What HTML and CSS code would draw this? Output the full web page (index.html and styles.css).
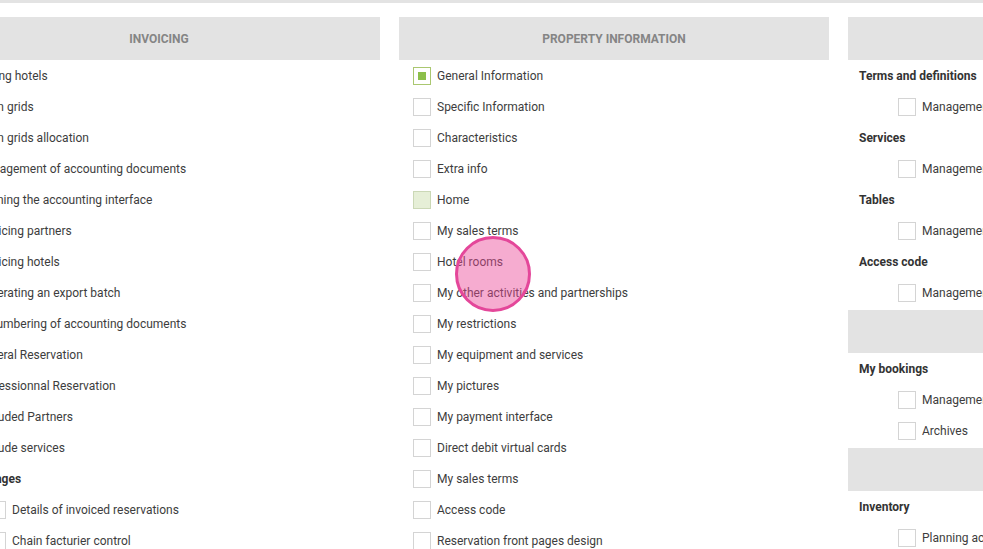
FILE: index.html
```html
<!DOCTYPE html>
<html lang="en">

<head>
  <meta charset="UTF-8">
  <meta name="viewport" content="width=device-width, initial-scale=1.0">
  <title>Access rights</title>
  <link rel="stylesheet" href="styles.css">
</head>

<body>
  <div class="topbar"></div>

  <div class="board">
    <section class="col col-first">
      <div class="band">Invoicing</div>
      <ul class="list">
        <li class="item"><span class="box"></span>Listing hotels</li>
        <li class="item"><span class="box"></span>Open grids</li>
        <li class="item"><span class="box"></span>Open grids allocation</li>
        <li class="item"><span class="box"></span>Management of accounting documents</li>
        <li class="item"><span class="box"></span>Defining the accounting interface</li>
        <li class="item"><span class="box"></span>Invoicing partners</li>
        <li class="item"><span class="box"></span>Invoicing hotels</li>
        <li class="item"><span class="box"></span>Generating an export batch</li>
        <li class="item"><span class="box"></span>Renumbering of accounting documents</li>
        <li class="item"><span class="box"></span>General Reservation</li>
        <li class="item"><span class="box"></span>Professionnal Reservation</li>
        <li class="item"><span class="box"></span>Excluded Partners</li>
        <li class="item"><span class="box"></span>Exclude services</li>
        <li class="group">Report pages</li>
        <li class="item sub"><span class="box"></span>Details of invoiced reservations</li>
        <li class="item sub"><span class="box"></span>Chain facturier control</li>
      </ul>
    </section>

    <section class="col">
      <div class="band">Property information</div>
      <ul class="list">
        <li class="item"><span class="box checked"></span>General Information</li>
        <li class="item"><span class="box"></span>Specific Information</li>
        <li class="item"><span class="box"></span>Characteristics</li>
        <li class="item"><span class="box"></span>Extra info</li>
        <li class="item"><span class="box partial"></span>Home</li>
        <li class="item"><span class="box"></span>My sales terms</li>
        <li class="item"><span class="box"></span>Hotel rooms</li>
        <li class="item"><span class="box"></span>My other activities and partnerships</li>
        <li class="item"><span class="box"></span>My restrictions</li>
        <li class="item"><span class="box"></span>My equipment and services</li>
        <li class="item"><span class="box"></span>My pictures</li>
        <li class="item"><span class="box"></span>My payment interface</li>
        <li class="item"><span class="box"></span>Direct debit virtual cards</li>
        <li class="item"><span class="box"></span>My sales terms</li>
        <li class="item"><span class="box"></span>Access code</li>
        <li class="item"><span class="box"></span>Reservation front pages design</li>
      </ul>
    </section>

    <section class="col">
      <div class="band">Settings</div>
      <ul class="list">
        <li class="group">Terms and definitions</li>
        <li class="item sub"><span class="box"></span>Management</li>
        <li class="group">Services</li>
        <li class="item sub"><span class="box"></span>Management</li>
        <li class="group">Tables</li>
        <li class="item sub"><span class="box"></span>Management</li>
        <li class="group">Access code</li>
        <li class="item sub"><span class="box"></span>Management</li>
      </ul>
      <div class="band band-next">Reservations</div>
      <ul class="list">
        <li class="group">My bookings</li>
        <li class="item sub"><span class="box"></span>Management</li>
        <li class="item sub"><span class="box"></span>Archives</li>
      </ul>
      <div class="band band-next">Availability</div>
      <ul class="list">
        <li class="group">Inventory</li>
        <li class="item sub"><span class="box"></span>Planning access</li>
      </ul>
    </section>
  </div>

  <div class="touch"></div>
</body>

</html>
```

FILE: styles.css
```css
body {
  font-family: Roboto, "Liberation Sans", sans-serif;
  font-size: 12px;
  color: #3d3d3d;
  background-color: #ffffff;
  margin: 0;
  padding: 0;
  overflow: hidden;
  height: 100vh;
}

.topbar {
  height: 3px;
  background-color: #e3e3e3;
}

.board {
  display: flex;
  gap: 19px;
  margin-top: 14px;
  margin-left: -62px;
}

.col {
  width: 430px;
  flex: none;
}

.col-first {
  width: 442px;
}

.band {
  height: 43px;
  line-height: 45px;
  background-color: #e3e3e3;
  color: #858585;
  font-weight: bold;
  text-transform: uppercase;
  text-align: center;
  font-size: 12px;
}

.band-next {
  margin-top: 2px;
}

.list {
  list-style: none;
  margin: 0;
  padding: 0;
}

.item {
  display: flex;
  align-items: center;
  height: 31px;
  box-sizing: border-box;
  padding-top: 1px;
  padding-left: 14px;
  white-space: nowrap;
}

.item.sub {
  padding-left: 50px;
}

.group {
  height: 31px;
  box-sizing: border-box;
  padding-top: 2px;
  line-height: 29px;
  padding-left: 11px;
  font-weight: bold;
  color: #333333;
  white-space: nowrap;
}

.box {
  width: 18px;
  height: 18px;
  box-sizing: border-box;
  border: 1px solid #d4d4d4;
  background-color: #ffffff;
  margin-right: 6px;
  flex: none;
  display: flex;
  align-items: center;
  justify-content: center;
}

.box.checked {
  border-color: #aac770;
}

.box.checked::after {
  content: "";
  width: 8px;
  height: 8px;
  background-color: #8cbf4a;
}

.box.partial {
  border-color: #cbd8b6;
  background-color: #e6efd7;
}

.touch {
  position: fixed;
  left: 455px;
  top: 236px;
  width: 76px;
  height: 76px;
  box-sizing: border-box;
  border-radius: 50%;
  border: 3px solid #e4479a;
  background-color: rgba(236, 70, 150, 0.45);
}
```
